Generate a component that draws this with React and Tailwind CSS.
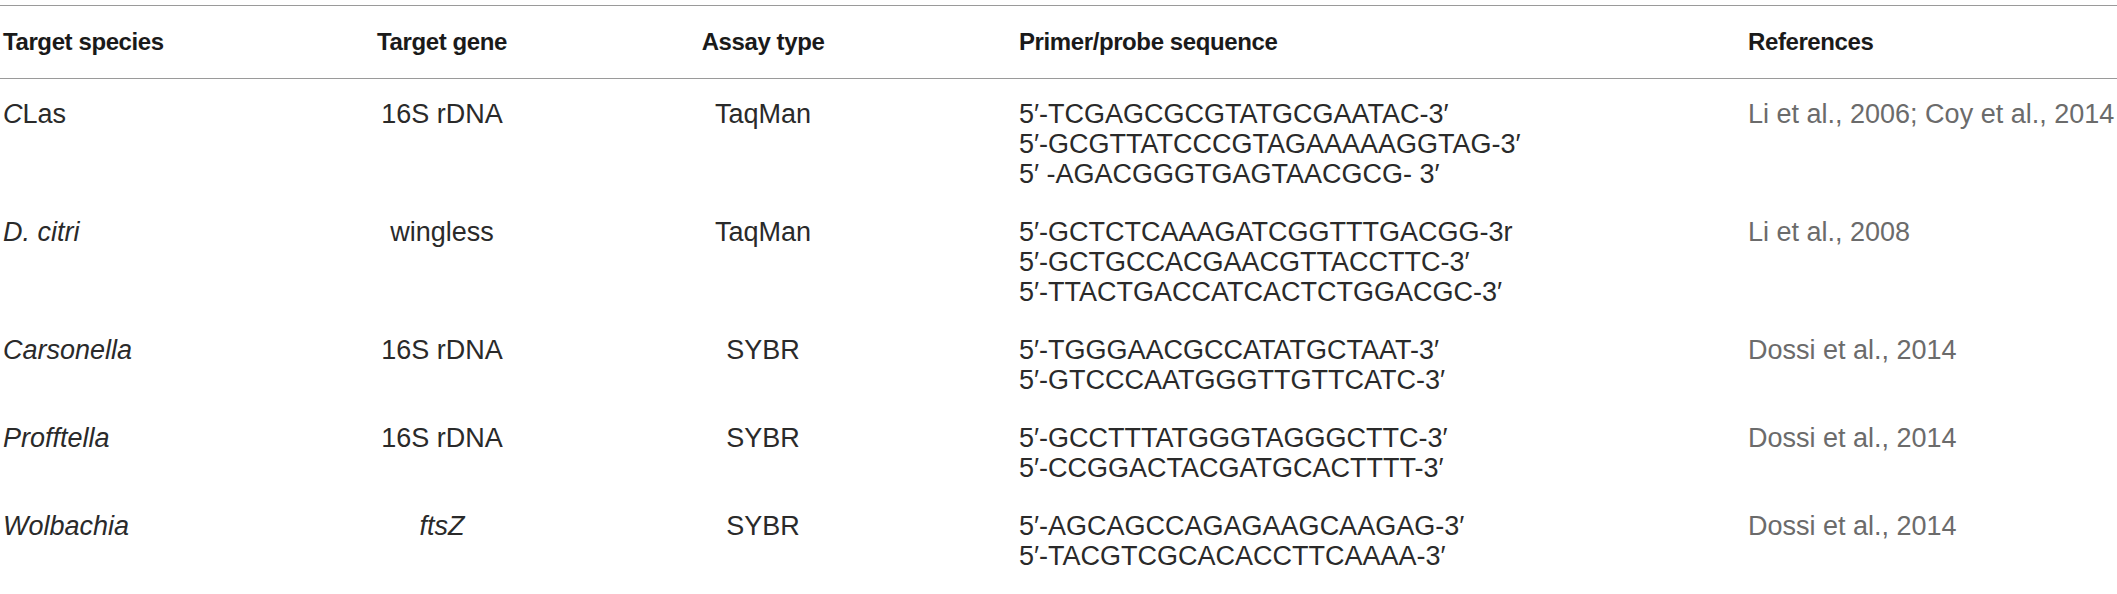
import React from 'react';

const rows = [
  {
    species: 'CLas',
    italicPrefix: 'C',
    gene: '16S rDNA',
    assay: 'TaqMan',
    seqs: [
      '5′-TCGAGCGCGTATGCGAATAC-3′',
      '5′-GCGTTATCCCGTAGAAAAAGGTAG-3′',
      '5′ -AGACGGGTGAGTAACGCG- 3′',
    ],
    refs: 'Li et al., 2006; Coy et al., 2014',
  },
  {
    species: 'D. citri',
    italic: true,
    gene: 'wingless',
    assay: 'TaqMan',
    seqs: [
      '5′-GCTCTCAAAGATCGGTTTGACGG-3r',
      '5′-GCTGCCACGAACGTTACCTTC-3′',
      '5′-TTACTGACCATCACTCTGGACGC-3′',
    ],
    refs: 'Li et al., 2008',
  },
  {
    species: 'Carsonella',
    italic: true,
    gene: '16S rDNA',
    assay: 'SYBR',
    seqs: ['5′-TGGGAACGCCATATGCTAAT-3′', '5′-GTCCCAATGGGTTGTTCATC-3′'],
    refs: 'Dossi et al., 2014',
  },
  {
    species: 'Profftella',
    italic: true,
    gene: '16S rDNA',
    assay: 'SYBR',
    seqs: ['5′-GCCTTTATGGGTAGGGCTTC-3′', '5′-CCGGACTACGATGCACTTTT-3′'],
    refs: 'Dossi et al., 2014',
  },
  {
    species: 'Wolbachia',
    italic: true,
    gene: 'ftsZ',
    geneItalic: true,
    assay: 'SYBR',
    seqs: ['5′-AGCAGCCAGAGAAGCAAGAG-3′', '5′-TACGTCGCACACCTTCAAAA-3′'],
    refs: 'Dossi et al., 2014',
  },
];

const cols = 'grid grid-cols-[300px_284px_358px_806px_1fr]';

const App = () => {
  return (
    <div className="w-[2117px] h-[594px] bg-white pt-[5px] overflow-hidden font-['Liberation_Sans',Arial,sans-serif] text-[27px] leading-[30px] text-[#2a2a2a]">
      <div className={`${cols} border-t border-b border-[#9a9a9a] py-[21px] font-bold text-[#1a1a1a] text-[24px] tracking-[-0.4px]`}>
        <div className="pl-[3px]">Target species</div>
        <div className="text-center">Target gene</div>
        <div className="text-center">Assay type</div>
        <div className="pl-[77px]">Primer/probe sequence</div>
        <div>References</div>
      </div>

      {rows.map((row) => (
        <div key={row.species} className={`${cols} pt-[20px] pb-[8px]`}>
          <div className="pl-[3px]">
            {row.italicPrefix ? (
              <>
                <span className="italic">{row.italicPrefix}</span>
                {row.species.slice(row.italicPrefix.length)}
              </>
            ) : (
              <span className={row.italic ? 'italic' : ''}>{row.species}</span>
            )}
          </div>
          <div className={`text-center ${row.geneItalic ? 'italic' : ''}`}>{row.gene}</div>
          <div className="text-center">{row.assay}</div>
          <div className="pl-[77px] flex flex-col whitespace-pre">
            {row.seqs.map((s) => (
              <span key={s}>{s}</span>
            ))}
          </div>
          <div className="text-[#6b6b6b] whitespace-nowrap">{row.refs}</div>
        </div>
      ))}
    </div>
  );
};

export default App;
